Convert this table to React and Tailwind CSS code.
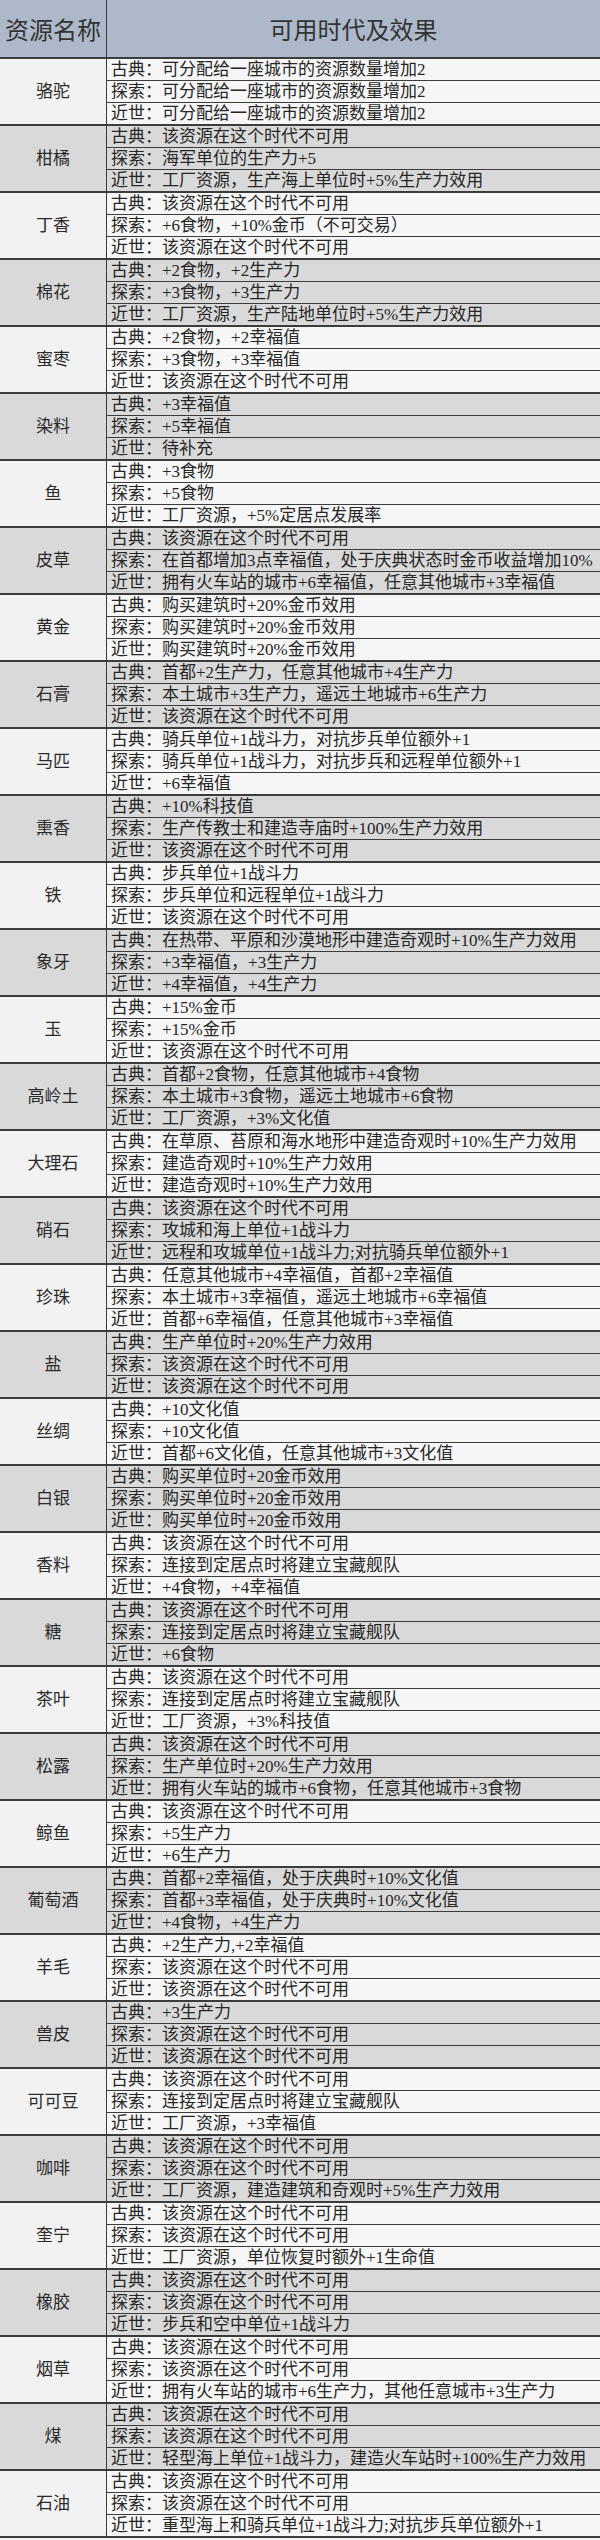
import React from 'react'

const NA = '该资源在这个时代不可用'
const FLEET = '连接到定居点时将建立宝藏舰队'

// [name, classical, exploration, modern]
const resources = [
  ['骆驼', '可分配给一座城市的资源数量增加2', '可分配给一座城市的资源数量增加2', '可分配给一座城市的资源数量增加2'],
  ['柑橘', NA, '海军单位的生产力+5', '工厂资源，生产海上单位时+5%生产力效用'],
  ['丁香', NA, '+6食物，+10%金币（不可交易）', NA],
  ['棉花', '+2食物，+2生产力', '+3食物，+3生产力', '工厂资源，生产陆地单位时+5%生产力效用'],
  ['蜜枣', '+2食物，+2幸福值', '+3食物，+3幸福值', NA],
  ['染料', '+3幸福值', '+5幸福值', '待补充'],
  ['鱼', '+3食物', '+5食物', '工厂资源，+5%定居点发展率'],
  ['皮草', NA, '在首都增加3点幸福值，处于庆典状态时金币收益增加10%', '拥有火车站的城市+6幸福值，任意其他城市+3幸福值'],
  ['黄金', '购买建筑时+20%金币效用', '购买建筑时+20%金币效用', '购买建筑时+20%金币效用'],
  ['石膏', '首都+2生产力，任意其他城市+4生产力', '本土城市+3生产力，遥远土地城市+6生产力', NA],
  ['马匹', '骑兵单位+1战斗力，对抗步兵单位额外+1', '骑兵单位+1战斗力，对抗步兵和远程单位额外+1', '+6幸福值'],
  ['熏香', '+10%科技值', '生产传教士和建造寺庙时+100%生产力效用', NA],
  ['铁', '步兵单位+1战斗力', '步兵单位和远程单位+1战斗力', NA],
  ['象牙', '在热带、平原和沙漠地形中建造奇观时+10%生产力效用', '+3幸福值，+3生产力', '+4幸福值，+4生产力'],
  ['玉', '+15%金币', '+15%金币', NA],
  ['高岭土', '首都+2食物，任意其他城市+4食物', '本土城市+3食物，遥远土地城市+6食物', '工厂资源，+3%文化值'],
  ['大理石', '在草原、苔原和海水地形中建造奇观时+10%生产力效用', '建造奇观时+10%生产力效用', '建造奇观时+10%生产力效用'],
  ['硝石', NA, '攻城和海上单位+1战斗力', '远程和攻城单位+1战斗力;对抗骑兵单位额外+1'],
  ['珍珠', '任意其他城市+4幸福值，首都+2幸福值', '本土城市+3幸福值，遥远土地城市+6幸福值', '首都+6幸福值，任意其他城市+3幸福值'],
  ['盐', '生产单位时+20%生产力效用', NA, NA],
  ['丝绸', '+10文化值', '+10文化值', '首都+6文化值，任意其他城市+3文化值'],
  ['白银', '购买单位时+20金币效用', '购买单位时+20金币效用', '购买单位时+20金币效用'],
  ['香料', NA, FLEET, '+4食物，+4幸福值'],
  ['糖', NA, FLEET, '+6食物'],
  ['茶叶', NA, FLEET, '工厂资源，+3%科技值'],
  ['松露', NA, '生产单位时+20%生产力效用', '拥有火车站的城市+6食物，任意其他城市+3食物'],
  ['鲸鱼', NA, '+5生产力', '+6生产力'],
  ['葡萄酒', '首都+2幸福值，处于庆典时+10%文化值', '首都+3幸福值，处于庆典时+10%文化值', '+4食物，+4生产力'],
  ['羊毛', '+2生产力,+2幸福值', NA, NA],
  ['兽皮', '+3生产力', NA, NA],
  ['可可豆', NA, FLEET, '工厂资源，+3幸福值'],
  ['咖啡', NA, NA, '工厂资源，建造建筑和奇观时+5%生产力效用'],
  ['奎宁', NA, NA, '工厂资源，单位恢复时额外+1生命值'],
  ['橡胶', NA, NA, '步兵和空中单位+1战斗力'],
  ['烟草', NA, NA, '拥有火车站的城市+6生产力，其他任意城市+3生产力'],
  ['煤', NA, NA, '轻型海上单位+1战斗力，建造火车站时+100%生产力效用'],
  ['石油', NA, NA, '重型海上和骑兵单位+1战斗力;对抗步兵单位额外+1'],
]

const eras = ['古典', '探索', '近世']

function ResourceGroup({ row, index }) {
  const gray = index % 2 === 1
  const [name, ...effects] = row

  return (
    <div className={`flex h-[67px] border-b-2 border-[#3c3c3c] ${gray ? 'bg-[#d9d9d9]' : 'bg-[#f2f2f2]'}`}>
      <div className="w-[107px] shrink-0 flex items-center justify-center border-r-[1.5px] border-[#3c3c3c] text-[17px] text-[#2a2a2a]">
        {name}
      </div>
      <div className="flex-1 flex flex-col">
        {effects.map((text, i) => (
          <div
            key={i}
            className={`flex-1 flex items-center pl-[4px] text-[17px] leading-none text-[#262626] whitespace-nowrap ${i > 0 ? 'border-t border-[#3c3c3c]' : ''} ${gray ? '' : 'bg-[#f6f6f6]'}`}
          >
            {eras[i]}：{text}
          </div>
        ))}
      </div>
    </div>
  )
}

export default function App() {
  return (
    <div
      className="w-[600px] h-[2540px] overflow-hidden bg-[#f2f2f2]"
      style={{ fontFamily: '"Liberation Serif", "Noto Sans CJK SC", serif' }}
    >
      <div
        className="flex h-[59px] bg-[#adb9ca] border-b-2 border-[#3c3c3c] text-[24px] text-[#333]"
        style={{ fontFamily: '"Noto Sans CJK SC", sans-serif' }}
      >
        <div className="w-[107px] shrink-0 flex items-center justify-center border-r-[1.5px] border-[#3c3c3c]">
          资源名称
        </div>
        <div className="flex-1 flex items-center justify-center">
          可用时代及效果
        </div>
      </div>

      {resources.map((row, index) => (
        <ResourceGroup key={row[0]} row={row} index={index} />
      ))}
    </div>
  )
}
